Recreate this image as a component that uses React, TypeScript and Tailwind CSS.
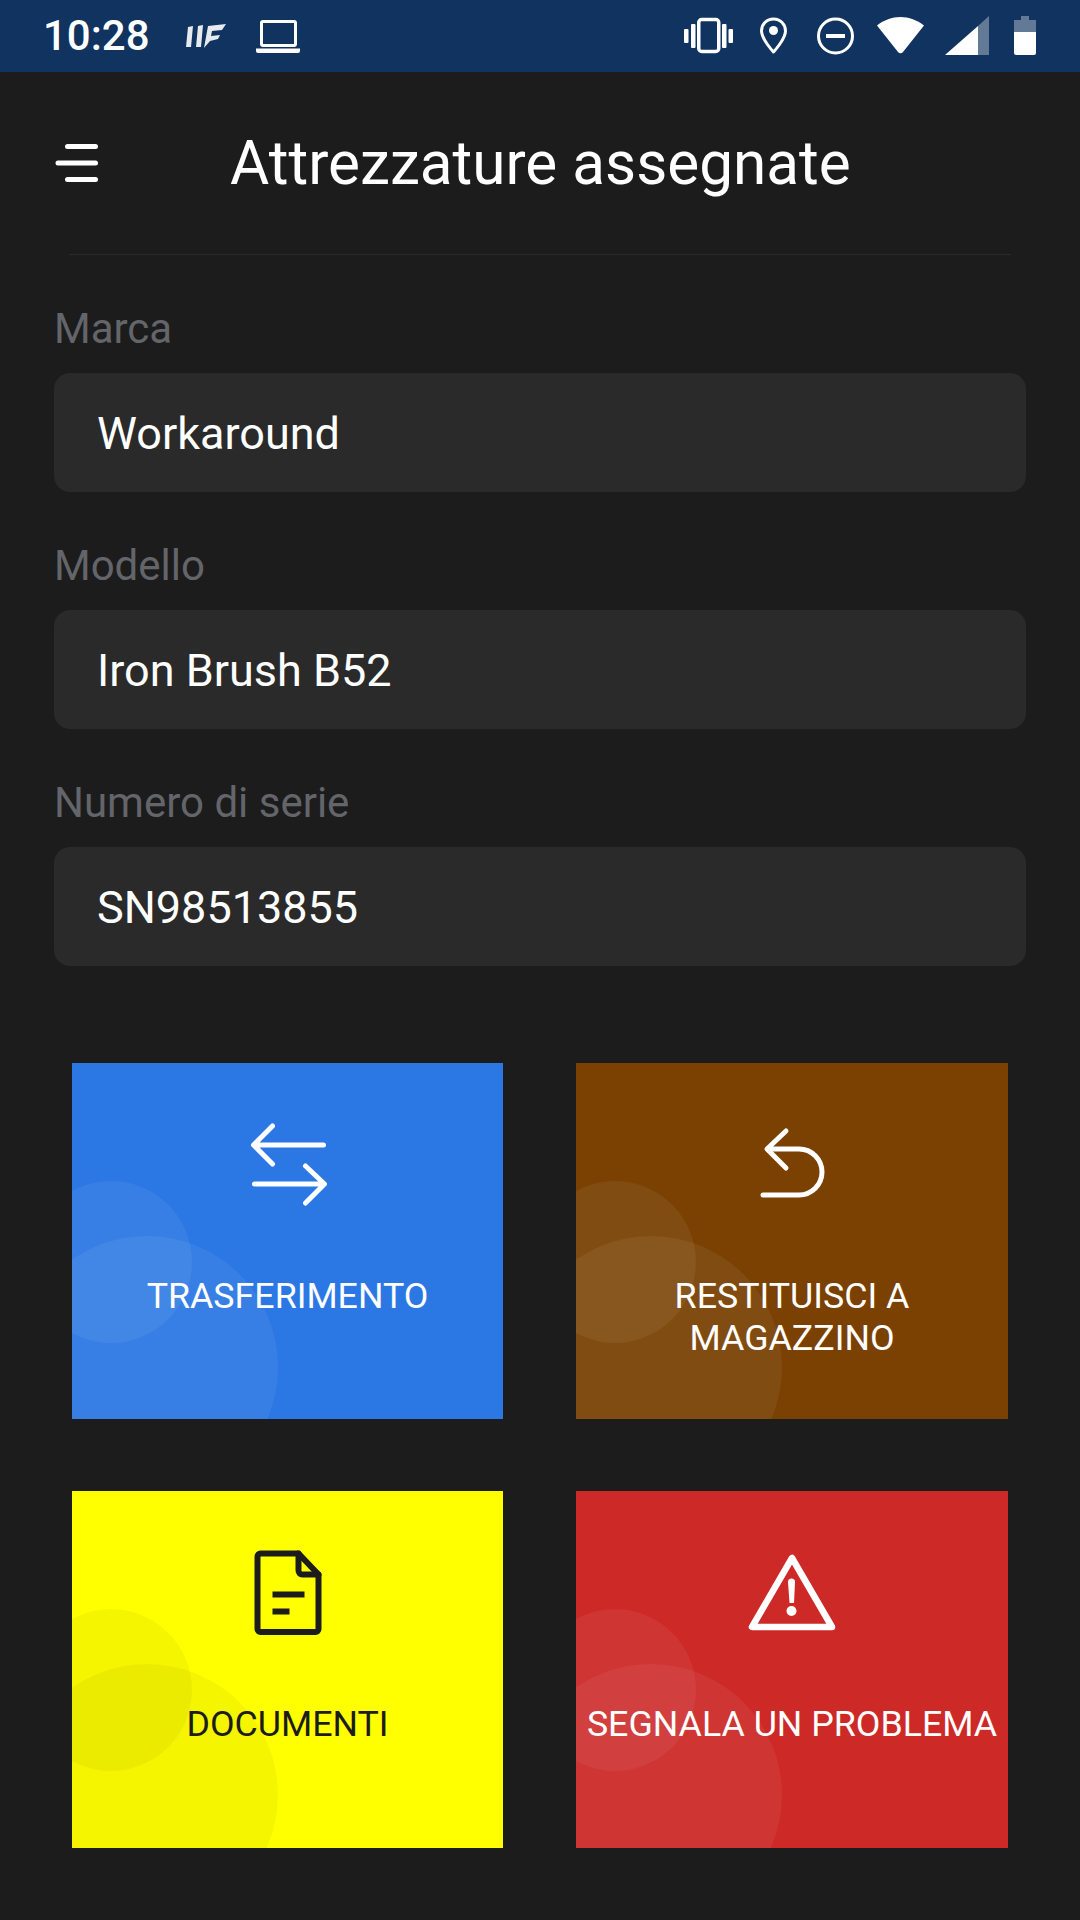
const ROBOTO = "font-['Roboto',sans-serif]";

function StatusBar() {
  return (
    <div className="h-[72px] bg-[#10335f] flex items-center justify-between pl-[43px] pr-[40px]">
      <div className="flex items-center">
        <span className="text-white text-[42px] font-medium leading-none">10:28</span>
        <svg className="ml-[30px]" width="120" height="40" viewBox="180 16 120 40">
          <g fill="#fff">
            <polygon points="188,27 193,26 191,47 186,47" opacity="0.9" />
            <polygon points="198,26 203,25 201,47 196,47" opacity="0.9" />
            <polygon points="208,26 226,24 222,30 212,31 211,36 220,35 218,39 210,41 204,48" opacity="0.9" />
            <rect x="261.500" y="21.500" width="34" height="24" rx="1.500" fill="none" stroke="#fff" strokeWidth="3" />
            <path d="M256 48.500h44v2.500a2 2 0 0 1-2 2h-40a2 2 0 0 1-2-2z" />
          </g>
        </svg>
      </div>
      <svg width="360" height="44" viewBox="680 14 360 44">
        <g fill="#fff">
          <rect x="684" y="29" width="4.500" height="14" rx="1" />
          <rect x="691" y="24" width="4.500" height="24" rx="1" />
          <rect x="698.750" y="19.500" width="20" height="32" rx="3" fill="none" stroke="#fff" strokeWidth="3.500" />
          <rect x="722" y="24" width="4.500" height="24" rx="1" />
          <rect x="728.500" y="29" width="4.500" height="14" rx="1" />
          <path d="M773.500 19c-6.900 0-12 5.200-12 12 0 8 12 21 12 21s12-13 12-21c0-6.800-5.100-12-12-12z" fill="none" stroke="#fff" strokeWidth="3" strokeLinejoin="round" />
          <circle cx="773.500" cy="30.500" r="4.500" />
          <circle cx="835.500" cy="36" r="17" fill="none" stroke="#fff" strokeWidth="3" />
          <rect x="826" y="34" width="19" height="4" />
          <path d="M877 25.500C884 20 892 17 900.500 17s16.500 3 23.500 8.500L903 52a3 3 0 0 1-5 0z" />
          <polygon points="978,26 945,55 978,55" />
          <polygon points="978,26 989,16 989,55 978,55" opacity="0.35" />
          <path d="M1021 16h8v4h7v12h-22V20h7z" opacity="0.35" />
          <path d="M1014 32h22v21a2 2 0 0 1-2 2h-18a2 2 0 0 1-2-2z" />
        </g>
      </svg>
    </div>
  );
}

function Header() {
  return (
    <div className="h-[183px]">
      <div className="h-[182px] flex items-center pl-[55px]">
        <svg width="43" height="38" viewBox="55 144 43 38">
          <g stroke="#fff" strokeWidth="5" strokeLinecap="round">
            <line x1="67.500" y1="146.500" x2="95.500" y2="146.500" />
            <line x1="58" y1="163" x2="95.500" y2="163" />
            <line x1="67.500" y1="179.500" x2="95.500" y2="179.500" />
          </g>
        </svg>
        <h1 className="ml-[132px] mt-[2px] text-white text-[60.250px] leading-none font-normal whitespace-nowrap">Attrezzature assegnate</h1>
      </div>
      <div className="h-px mx-[69px] bg-[#2a2a2a]" />
    </div>
  );
}

function Field({ label, value }: { label: string; value: string }) {
  return (
    <div className="flex flex-col">
      <div className="mb-[24px] pt-[1px] h-[42px] text-[#63656a] text-[42px] leading-[42px]">{label}</div>
      <div className="h-[119px] rounded-[16px] bg-[#2a2a2a] flex items-center pl-[43px] pt-[3px] text-white text-[45px]">{value}</div>
    </div>
  );
}

function Card({ bg, text, label, circleA, circleB, children }: { bg: string; text: string; label: string[]; circleA: string; circleB: string; children: React.ReactNode }) {
  return (
    <div className={`relative overflow-hidden h-full flex flex-col items-center pt-[47px] ${bg}`}>
      <div className={`absolute left-[-42px] top-[118px] w-[162px] h-[162px] rounded-full ${circleA}`} />
      <div className={`absolute left-[-56px] top-[173px] w-[262px] h-[262px] rounded-full ${circleB}`} />
      <div className="relative w-[120px] h-[110px]">{children}</div>
      <div className={`relative mt-[55px] text-center text-[35.750px] leading-[42px] ${text}`}>
        {label.map((l) => (
          <div key={l} className="whitespace-nowrap">{l}</div>
        ))}
      </div>
    </div>
  );
}

export default function App() {
  return (
    <div className={`w-[1080px] h-[1920px] bg-[#1c1c1c] overflow-hidden ${ROBOTO}`}>
      <StatusBar />
      <Header />
      <div className="px-[54px] pt-[52px] flex flex-col gap-[52px]">
        <Field label="Marca" value="Workaround" />
        <Field label="Modello" value="Iron Brush B52" />
        <Field label="Numero di serie" value="SN98513855" />
      </div>
      <div className="mt-[97px] ml-[72px] w-[936px] grid grid-cols-[431px_432px] grid-rows-[356px_357px] gap-x-[73px] gap-y-[72px]">
        <Card bg="bg-[#2b78e4]" text="text-white" label={["TRASFERIMENTO"]} circleA="bg-white/[0.06]" circleB="bg-white/[0.06]">
          <svg width="120" height="110" viewBox="227.500 1110 120 110" fill="none" stroke="#fff" strokeWidth="5" strokeLinecap="round" strokeLinejoin="round">
            <path d="M323 1145H254M272 1126l-19 19 19 19" />
            <path d="M254 1184H323M305 1166l19 18-19 19" />
          </svg>
        </Card>
        <Card bg="bg-[#7a4103]" text="text-white" label={["RESTITUISCI A", "MAGAZZINO"]} circleA="bg-white/[0.06]" circleB="bg-white/[0.06]">
          <svg width="120" height="110" viewBox="732 1110 120 110" fill="none" stroke="#fff" strokeWidth="5" strokeLinecap="round" strokeLinejoin="round">
            <path d="M786 1131l-19 18 19 19" />
            <path d="M768 1149H799a23 23 0 0 1 0 46H763" />
          </svg>
        </Card>
        <Card bg="bg-[#ffff00]" text="text-[#1c1c1c]" label={["DOCUMENTI"]} circleA="bg-black/[0.04]" circleB="bg-black/[0.04]">
          <svg width="120" height="110" viewBox="227.500 1538 120 110" fill="none" stroke="#1c1c1c" strokeWidth="6" strokeLinecap="round" strokeLinejoin="round">
            <path d="M260 1553.500H298L318 1574.500V1629a3 3 0 0 1-3 3H260a3 3 0 0 1-3-3V1556.500a3 3 0 0 1 3-3z" />
            <path d="M298 1553.500V1570a4 4 0 0 0 4 4.500H318" />
            <path d="M272 1594.500H304M272 1611.500H289" strokeLinecap="butt" />
          </svg>
        </Card>
        <Card bg="bg-[#cc2927]" text="text-white" label={["SEGNALA UN PROBLEMA"]} circleA="bg-white/[0.06]" circleB="bg-white/[0.06]">
          <svg width="120" height="110" viewBox="732 1538 120 110" fill="none" stroke="#fff" strokeWidth="6.500" strokeLinejoin="round">
            <path d="M792 1558L752 1627H832Z" />
            <path d="M788 1582a3.500 3.500 0 0 1 7 0L794 1603h-4.500z" fill="#fff" stroke="none" />
            <circle cx="791.500" cy="1611" r="5" fill="#fff" stroke="none" />
          </svg>
        </Card>
      </div>
    </div>
  );
}
